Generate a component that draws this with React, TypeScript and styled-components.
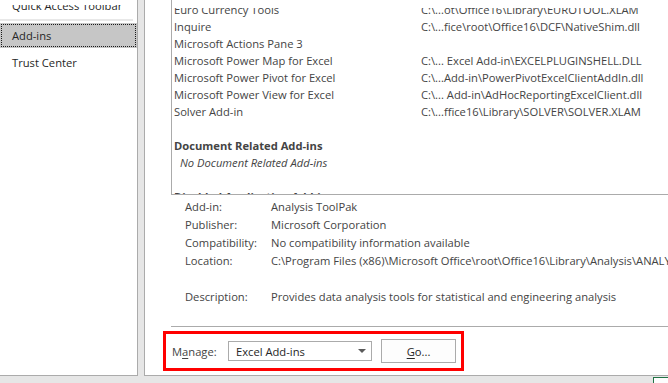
import React from "react";
import styled, { createGlobalStyle } from "styled-components";

const GlobalStyle = createGlobalStyle`
  html, body {
    margin: 0;
    padding: 0;
  }
  body {
    background: #e6e6e6;
    overflow: hidden;
    width: 668px;
    height: 383px;
    font-family: "Segoe UI", "Open Sans", "Noto Sans", sans-serif;
    font-size: 11.2px;
    color: #444444;
  }
`;

const Dialog = styled.div`
  display: flex;
  height: 376px;
  gap: 6px;
  width: 668px;
`;

const Sidebar = styled.nav`
  width: 138px;
  flex: none;
  box-sizing: border-box;
  background: #ffffff;
  border-right: 1px solid #ababab;
  border-bottom: 1px solid #ababab;
  padding-top: 5px;
  display: flex;
  flex-direction: column;
`;

const SideViewport = styled.div`
  flex: 1;
  overflow: hidden;
`;

const SideList = styled.div`
  display: flex;
  flex-direction: column;
  margin-top: -12px;
`;

const SideItem = styled.div<{ $selected?: boolean }>`
  height: 25px;
  line-height: 25px;
  padding-left: 12px;
  margin-bottom: 2px;
  white-space: nowrap;
  color: #262626;
  background: ${(p) => (p.$selected ? "#c6c6c6" : "transparent")};
  outline: ${(p) => (p.$selected ? "1px dotted #1a1a1a" : "none")};
  outline-offset: -2px;
`;

const SideDivider = styled.div`
  height: 2px;
  margin: -1px 4px 2px 0;
  background: #e8e8e8;
`;

const Main = styled.section`
  flex: 1;
  min-width: 0;
  box-sizing: border-box;
  background: #ffffff;
  border-left: 1px solid #ababab;
  border-bottom: 1px solid #ababab;
  overflow: hidden;
  padding-left: 18px;
  display: flex;
  flex-direction: column;
`;

const ListBox = styled.div`
  margin-left: 8px;
  width: 620px;
  height: 195px;
  flex: none;
  box-sizing: border-box;
  border-left: 1px solid #ababab;
  border-bottom: 1px solid #ababab;
  padding: 8px 0 0 2px;
  display: flex;
  flex-direction: column;
`;

const ListViewport = styled.div`
  flex: 1;
  overflow: hidden;
`;

const ListContent = styled.div`
  margin-top: -7px;
`;

const ListRow = styled.div`
  display: grid;
  grid-template-columns: 247px auto;
  height: 17px;
  line-height: 17px;
  white-space: nowrap;
`;

const GroupHeading = styled.div`
  height: 17px;
  line-height: 17px;
  font-weight: 700;
  white-space: nowrap;
`;

const EmptyNote = styled.div`
  height: 17px;
  line-height: 17px;
  font-style: italic;
  padding-left: 6px;
  white-space: nowrap;
`;

const Spacer = styled.div`
  height: 17px;
`;

const Details = styled.div`
  margin-left: 22px;
  padding-top: 3px;
  display: flex;
  flex-direction: column;
`;

const DetailRow = styled.div`
  display: grid;
  grid-template-columns: 86px auto;
  height: 18px;
  line-height: 18px;
  white-space: nowrap;
`;

const DetailGap = styled.div`
  height: 18px;
`;

const Separator = styled.div`
  margin-left: 8px;
  margin-top: auto;
  width: 620px;
  border-top: 1px solid #ababab;
`;

const ManageBox = styled.div`
  margin-top: 4px;
  margin-bottom: 4px;
  width: 301px;
  height: 40px;
  box-sizing: border-box;
  border: 3px solid #ff0000;
  display: flex;
  align-items: center;
  padding-left: 6px;
`;

const ManageLabel = styled.label`
  width: 56px;
  flex: none;
  white-space: nowrap;
`;

const Key = styled.span`
  text-decoration: underline;
  text-underline-offset: 2px;
`;

const Select = styled.div`
  width: 144px;
  height: 20px;
  box-sizing: border-box;
  border: 1px solid #ababab;
  background: #ffffff;
  display: flex;
  align-items: center;
  justify-content: space-between;
  padding: 0 5px 0 7px;
  white-space: nowrap;
  color: #262626;
`;

const Arrow = styled.span`
  width: 0;
  height: 0;
  border-left: 4px solid transparent;
  border-right: 4px solid transparent;
  border-top: 4px solid #5a5a5a;
`;

const GoButton = styled.button`
  margin-left: 9px;
  width: 75px;
  height: 24px;
  box-sizing: border-box;
  border: 1px solid #ababab;
  background: #fdfdfd;
  font: inherit;
  color: #262626;
  padding: 0;
`;

const Footer = styled.div`
  display: flex;
  justify-content: flex-end;
  padding-top: 1px;
  width: 668px;
`;

const OkButton = styled.button`
  width: 75px;
  height: 24px;
  margin-right: -60px;
  flex: none;
  box-sizing: border-box;
  border: 1px solid #217346;
  background: #fdfdfd;
  font: inherit;
  padding: 0;
`;

const active: [string, string][] = [
  ["Euro Currency Tools", "C:\\...ot\\Office16\\Library\\EUROTOOL.XLAM"],
  ["Inquire", "C:\\...fice\\root\\Office16\\DCF\\NativeShim.dll"],
  ["Microsoft Actions Pane 3", ""],
  ["Microsoft Power Map for Excel", "C:\\... Excel Add-in\\EXCELPLUGINSHELL.DLL"],
  ["Microsoft Power Pivot for Excel", "C:\\...Add-in\\PowerPivotExcelClientAddIn.dll"],
  ["Microsoft Power View for Excel", "C:\\... Add-in\\AdHocReportingExcelClient.dll"],
  ["Solver Add-in", "C:\\...ffice16\\Library\\SOLVER\\SOLVER.XLAM"],
];

const details: [string, string][] = [
  ["Add-in:", "Analysis ToolPak"],
  ["Publisher:", "Microsoft Corporation"],
  ["Compatibility:", "No compatibility information available"],
  ["Location:", "C:\\Program Files (x86)\\Microsoft Office\\root\\Office16\\Library\\Analysis\\ANALYS32.XLL"],
];

export default function App() {
  return (
    <>
      <GlobalStyle />
      <Dialog>
        <Sidebar>
          <SideViewport>
            <SideList>
              <SideItem>Quick Access Toolbar</SideItem>
              <SideDivider />
              <SideItem $selected>Add-ins</SideItem>
              <SideItem>Trust Center</SideItem>
            </SideList>
          </SideViewport>
        </Sidebar>
        <Main>
          <ListBox>
            <ListViewport>
              <ListContent>
                {active.map(([name, loc]) => (
                  <ListRow key={name}>
                    <span>{name}</span>
                    <span>{loc}</span>
                  </ListRow>
                ))}
                <Spacer />
                <GroupHeading>Document Related Add-ins</GroupHeading>
                <EmptyNote>No Document Related Add-ins</EmptyNote>
                <Spacer />
                <GroupHeading>Disabled Application Add-ins</GroupHeading>
              </ListContent>
            </ListViewport>
          </ListBox>
          <Details>
            {details.map(([k, v]) => (
              <DetailRow key={k}>
                <span>{k}</span>
                <span>{v}</span>
              </DetailRow>
            ))}
            <DetailGap />
            <DetailRow>
              <span>Description:</span>
              <span>Provides data analysis tools for statistical and engineering analysis</span>
            </DetailRow>
          </Details>
          <Separator />
          <ManageBox>
            <ManageLabel>
              M<Key>a</Key>nage:
            </ManageLabel>
            <Select>
              <span>Excel Add-ins</span>
              <Arrow />
            </Select>
            <GoButton>
              <Key>G</Key>o...
            </GoButton>
          </ManageBox>
        </Main>
      </Dialog>
      <Footer>
        <OkButton>OK</OkButton>
      </Footer>
    </>
  );
}
